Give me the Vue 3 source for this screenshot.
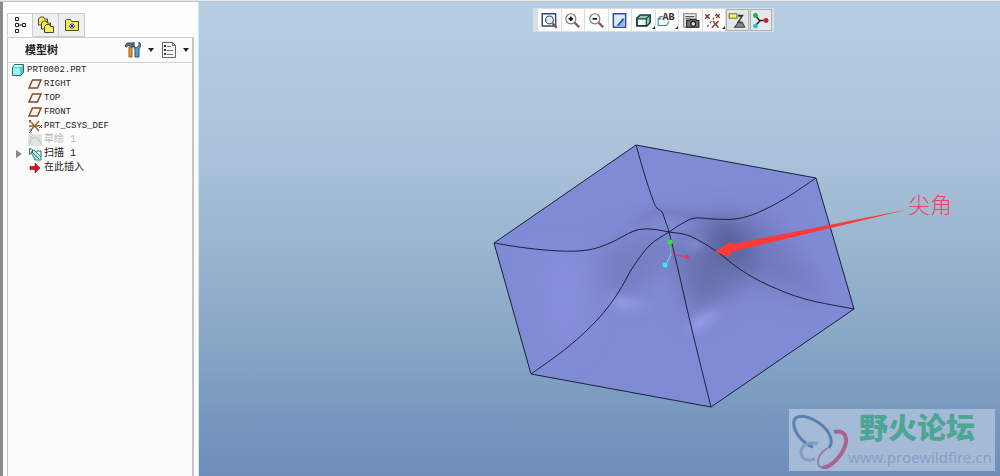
<template>
  <div class="app">
    <div class="top-edge"></div>

    <div class="workspace">
      <aside class="sidebar">
        <div class="navigator">
          <nav class="tabs">
            <button
              v-for="tab in tabs"
              :key="tab.id"
              type="button"
              class="tab"
              :class="{ active: activeTab === tab.id }"
              :aria-label="tab.label"
              @click="activeTab = tab.id"
            >
              <svg v-if="tab.id === 'tree'" width="14" height="18" viewBox="0 0 14 18" fill="none" stroke="#222">
                <path d="M2.5 1.5h3v3h-3zM2.5 7.5h3v3h-3zM9.500 7.500h3v3h-3zM2.500 13.500h3v3h-3zM6 9h3" />
              </svg>
              <svg v-else-if="tab.id === 'folders'" width="18" height="18" viewBox="0 0 18 18" fill="#f3ee62" stroke="#4a4618">
                <path d="M1.500 9V3l2-2h3l1 2h3v6z" />
                <path d="M4.500 13V7l2-2h3l1 2h3v6z" />
                <path d="M7.500 16.500V10.500l2-2h3l1 2h3v6z" />
              </svg>
              <svg v-else width="16" height="16" viewBox="0 0 16 16">
                <path d="M1.500 13.500v-10l1-1h4l1 2h7v9z" fill="#f5ee5c" stroke="#4a4618" />
                <path d="M8 6v6M5 9h6M6 7l4 4M10 7l-4 4" stroke="#2746b8" />
              </svg>
            </button>
          </nav>

          <div class="tree-panel">
            <header class="tree-header">
              <h2>模型树</h2>
              <button type="button" class="menu-button" aria-label="设置">
                <svg width="17" height="18" viewBox="0 0 17 18">
                  <path d="M1 5l2-3h6v4H7L5 4 2 6z" fill="#68777f" stroke="#384850" />
                  <path d="M5 6h3v10H5z" fill="#e39b38" stroke="#9a5a16" />
                  <path d="M10 1v4l2 2 3-2V1l2 3-2 4v8h-4V8L9 5z" fill="#4fa3cf" stroke="#28506a" />
                </svg>
                <span class="caret"></span>
              </button>
              <button type="button" class="menu-button list" aria-label="显示">
                <svg width="14" height="16" viewBox="0 0 14 16">
                  <path d="M.5 .5h10l3 3v12H.5z" fill="#fafaf4" stroke="#666" />
                  <path d="M10.500 .5v3h3" fill="none" stroke="#666" />
                  <path d="M2 4h2M2 8h2M2 12h2" stroke="#333" stroke-width="2" />
                  <path d="M5 4.500h4M5 8.500h6M5 12.500h6" stroke="#777" />
                </svg>
                <span class="caret"></span>
              </button>
            </header>

            <ul class="tree">
              <li
                v-for="item in items"
                :key="item.name"
                :class="{ root: item.icon === 'part', feature: item.feature, disabled: item.disabled }"
              >
                <span class="expander"><span v-if="item.expandable" class="triangle"></span></span>
                <svg v-if="item.icon === 'part'" class="icon" viewBox="0 0 14 14">
                  <path d="M1.500 4.500l2-3h9v8l-3 3h-8z" fill="#58c8cc" stroke="#286870" />
                  <path d="M2 5h7v7H2z" fill="#9df2f0" />
                  <path d="M2 4l2-2h8l-2 2z" fill="#d2fbf8" />
                </svg>
                <svg v-else-if="item.icon === 'plane'" class="icon" viewBox="0 0 14 14">
                  <path d="M4.500 3h8.500l-3.500 8H1z" fill="#fff8f0" stroke="#884522" stroke-width="1.400" />
                </svg>
                <svg v-else-if="item.icon === 'csys'" class="icon" viewBox="0 0 14 14">
                  <path d="M1 7h10M3 3l8 9M11 2L3 11" stroke="#a06424" stroke-width="1.400" />
                  <path d="M1 1l2 2M3 1L1 4M11 6l3 3M14 6l-3 3M1 11h3l-3 3h3" stroke="#555" fill="none" />
                </svg>
                <svg v-else-if="item.icon === 'sketch'" class="icon" viewBox="0 0 14 14">
                  <path d="M0 1h14v12H0z" fill="#e3e3e1" />
                  <path d="M2 11c1-9 8-9 11 0M2 5l3-3" fill="none" stroke="#bcbcb8" />
                </svg>
                <svg v-else-if="item.icon === 'sweep'" class="icon" viewBox="0 0 14 14">
                  <path d="M3 5l3-2 7 7v3H7z" fill="#a8ecec" stroke="#428088" />
                  <path d="M1.500 1.500l3 1v3l-3 2zM4 5l7 7M8 4h5v6" fill="none" stroke="#41656b" />
                </svg>
                <svg v-else class="icon" viewBox="0 0 14 14">
                  <path d="M2 5.500h5V2l5 5-5 5V8.500H2z" fill="#e01222" stroke="#780c12" stroke-width=".6" />
                </svg>
                <span>{{ item.name }}</span>
              </li>
            </ul>
          </div>
        </div>
      </aside>

      <main class="viewport">
        <svg class="model" viewBox="199 2 801 474" role="img" aria-label="扫描 1">
          <defs>
            <clipPath id="body-clip"><path :d="outline" /></clipPath>
            <filter id="soft" x="-60%" y="-60%" width="220%" height="220%">
              <feGaussianBlur stdDeviation="13" />
            </filter>
            <filter id="fine" x="-60%" y="-60%" width="220%" height="220%">
              <feGaussianBlur stdDeviation="5" />
            </filter>
          </defs>

          <path :d="outline" fill="#808bd5" />
          <g clip-path="url(#body-clip)">
            <g filter="url(#soft)">
              <path d="M690 220L770 216L830 300L770 288L735 268L706 240Z" fill="#727bc0" />
              <path d="M700 218L742 222L758 276L714 250Z" fill="#525b92" />
              <path d="M672 238L708 246L750 280L692 316Z" fill="#676fab" />
              <path d="M598 250L655 230L668 258L640 292L606 300Z" fill="#747ec1" />
              <path d="M535 256L590 256L580 340L550 360Z" fill="#858fdc" />
            </g>
            <g filter="url(#fine)">
              <path d="M624 228L657 207L700 215L720 219L690 219L657 213Z" fill="#6a73b0" />
              <path d="M660 217L684 220L670 229Z" fill="#838ed5" />
              <path d="M684 246L700 240L706 243L694 250Z" fill="#8c96dc" />
              <path d="M610 296L624 298L650 305L618 309Z" fill="#949eee" />
              <path d="M690 322L724 305L712 320L693 334Z" fill="#959feb" />
            </g>
          </g>

          <path :d="outline" class="edge" />
          <path v-for="(curve, i) in curves" :key="i" :d="smooth(curve)" class="edge" />

          <g class="csys">
            <path d="M671 254L670 242" stroke="#48c96c" />
            <path d="M671 254L666 265" stroke="#7fd8f2" />
            <path d="M672 254L686 257" stroke="#d8405c" />
            <circle cx="670" cy="242" r="2.500" fill="#2bea3c" />
            <circle cx="665" cy="265" r="2.500" fill="#3ce6fa" />
            <circle cx="687" cy="257" r="2" fill="#e23a4c" />
          </g>

          <path d="M910 209L733 244L730 242L715 252L730 257L731 252Z" fill="#fd3a37" />
          <text x="908" y="213" class="note">尖角</text>
        </svg>

        <div class="view-toolbar" role="toolbar">
          <button
            v-for="tool in tools"
            :key="tool.id"
            type="button"
            :aria-label="tool.label"
            :class="{ pressed: tool.pressed }"
          >
            <svg width="19" height="19" viewBox="0 0 17 17" fill="none">
              <template v-if="tool.id === 'refit'">
                <path d="M2 2.500h12v11H2z" fill="#fff" stroke="#2c4682" stroke-width="1.300" />
                <circle cx="8.500" cy="8" r="3.500" fill="#dceef6" stroke="#445" />
                <path d="M11 11l4 4" stroke="#8c5040" stroke-width="2" />
              </template>
              <template v-else-if="tool.id === 'zoomIn' || tool.id === 'zoomOut'">
                <circle cx="7" cy="7" r="4.500" fill="#f6f9fb" stroke="#777" />
                <path d="M5 7h4" stroke="#111" stroke-width="1.600" />
                <path v-if="tool.id === 'zoomIn'" d="M7 5v4" stroke="#111" stroke-width="1.600" />
                <path d="M10.500 10.500l4 4" stroke="#8c5040" stroke-width="2" />
              </template>
              <template v-else-if="tool.id === 'repaint'">
                <path d="M3 2.500h11v12H3z" fill="#dcebfb" stroke="#2c4da0" stroke-width="1.300" />
                <path d="M5 14l8-8v8z" fill="#8fb6ea" />
                <path d="M7 13l5-6" stroke="#2b4d94" stroke-width="1.500" />
              </template>
              <template v-else-if="tool.id === 'shading'">
                <path d="M2.500 6.500l3-3h9v7l-3 3h-9z" fill="#8bcab8" stroke="#173b34" stroke-width="1.300" />
                <path d="M3 7h8v6H3z" fill="#f4fffb" stroke="#173b34" />
                <path d="M11 7l3-3" stroke="#173b34" />
              </template>
              <template v-else-if="tool.id === 'views'">
                <path d="M5 5H3L1 7v6h7l2-2V9M1 7h3" stroke="#3c8796" />
                <text x="5" y="8" class="glyph">AB</text>
              </template>
              <template v-else-if="tool.id === 'capture'">
                <path d="M2.500 2.500h11v12h-11z" fill="#f2f2f2" stroke="#777" />
                <path d="M4 5h8M4 7h5" stroke="#555" />
                <path d="M5 8.500h3l1-1h4l1 1h2v6H5z" fill="#777" stroke="#222" />
                <circle cx="11" cy="11.500" r="2.200" fill="#ddd" stroke="#111" />
              </template>
              <template v-else-if="tool.id === 'datum'">
                <path d="M1 3l4 4M5 3L1 7M8 9l5 6M13 9l-6 6M11 3l3 3M14 3l-3 3" stroke="#8c3d2c" stroke-width="1.300" />
                <path d="M3 14L12 2" stroke="#444" stroke-dasharray="2 2" />
              </template>
              <template v-else-if="tool.id === 'annotation'">
                <path d="M1 2.500h7v4H1z" fill="#f4ee75" stroke="#817522" />
                <path d="M9 4.500h3M9 4h4l-4 6h4" stroke="#333" stroke-width="1.300" />
                <path d="M6 14.500l3-4h4l2 4z" fill="#888" stroke="#444" />
              </template>
              <template v-else>
                <path d="M4 4l4 5-4 4M8 8.500h6" stroke="#222" stroke-width="1.300" />
                <circle cx="4" cy="4" r="2.200" fill="#20b24a" />
                <circle cx="13.500" cy="8.500" r="2.200" fill="#c81f38" />
                <circle cx="4" cy="13.500" r="2.200" fill="#2bc0c4" />
              </template>
            </svg>
            <span v-if="tool.menu" class="corner"></span>
          </button>
        </div>

        <div class="watermark">
          <svg width="58" height="58" viewBox="0 0 58 58" fill="none">
            <path d="M39 37c6-8-1-21-15-28C11 2 2 5 4 15c2 9 10 18 19 21" stroke="#5a7fae" stroke-width="3" />
            <path d="M28 33c-8-3-17 1-17 8 0 8 7 9 14 7" stroke="#829dc4" stroke-width="3" />
            <path d="M44 21c8-2 13 2 12 10-2 12-14 25-24 26" stroke="#a86391" stroke-width="4" />
            <path d="M32 57c-7-3-5-14 6-20" stroke="#8b86b0" stroke-width="2" />
          </svg>
          <div class="brand">
            <strong>野火论坛</strong>
            <span>www.proewildfire.cn</span>
          </div>
        </div>
      </main>
    </div>
  </div>
</template>

<script setup>
import { ref } from "vue";

const activeTab = ref("tree");

const tabs = [
  { id: "tree", label: "模型树" },
  { id: "folders", label: "文件夹浏览器" },
  { id: "favorites", label: "收藏夹" },
];

const items = [
  { name: "PRT0002.PRT", icon: "part" },
  { name: "RIGHT", icon: "plane" },
  { name: "TOP", icon: "plane" },
  { name: "FRONT", icon: "plane" },
  { name: "PRT_CSYS_DEF", icon: "csys" },
  { name: "草绘 1", icon: "sketch", feature: true, disabled: true },
  { name: "扫描 1", icon: "sweep", feature: true, expandable: true },
  { name: "在此插入", icon: "insert", feature: true },
];

const tools = [
  { id: "refit", label: "重新调整" },
  { id: "zoomIn", label: "放大" },
  { id: "zoomOut", label: "缩小" },
  { id: "repaint", label: "重画" },
  { id: "shading", label: "显示样式", menu: true },
  { id: "views", label: "已命名视图", menu: true },
  { id: "capture", label: "视图管理器" },
  { id: "datum", label: "基准显示", menu: true },
  { id: "annotation", label: "注释显示", pressed: true },
  { id: "spin", label: "旋转中心", pressed: true },
];

const outline = "M636 145L816 178L854 309L711 407L531 374L494 243Z";

// boundary curves through the apex
const curves = [
  [[636, 145], [645, 176], [653, 200], [657, 208], [662, 212], [666, 223], [669, 232], [678, 269], [692, 330], [711, 407]],
  [[494, 243], [526, 248], [560, 251], [588, 250], [610, 243], [634, 231], [650, 229], [669, 232], [690, 236], [716, 251], [741, 270], [768, 285], [805, 299], [854, 309]],
  [[816, 178], [786, 198], [757, 213], [735, 219], [713, 219], [695, 218], [683, 223], [669, 232], [650, 245], [633, 267], [618, 293], [598, 319], [568, 347], [531, 374]],
];

// Catmull-Rom spline to cubic beziers
function smooth(pts) {
  let d = `M${pts[0].join(" ")}`;
  for (let i = 0; i < pts.length - 1; i++) {
    const p0 = pts[i - 1] || pts[i];
    const p1 = pts[i];
    const p2 = pts[i + 1];
    const p3 = pts[i + 2] || p2;
    d += `C${p1[0] + (p2[0] - p0[0]) / 6} ${p1[1] + (p2[1] - p0[1]) / 6}`;
    d += ` ${p2[0] - (p3[0] - p1[0]) / 6} ${p2[1] - (p3[1] - p1[1]) / 6}`;
    d += ` ${p2[0]} ${p2[1]}`;
  }
  return d;
}
</script>

<style>
body {
  margin: 0;
}
</style>

<style scoped>
.app {
  display: flex;
  flex-direction: column;
  min-height: 100vh;
  font-family: "Liberation Sans", "Noto Sans CJK SC", sans-serif;
  background: #fcfdfd;
}

.top-edge {
  height: 1px;
  background: #e4e8e8;
  border-bottom: 1px solid #bfc5c8;
}

.workspace {
  display: flex;
  flex: 1;
}

button {
  display: flex;
  align-items: center;
  justify-content: center;
  padding: 0;
  border: none;
  background: none;
  cursor: pointer;
}

.sidebar {
  display: flex;
  box-sizing: border-box;
  width: 199px;
  flex-shrink: 0;
  padding: 11px 4px 0 4px;
  border-left: 3px solid #8c8a88;
  border-right: 1px solid #d4e6f0;
}

.navigator {
  display: flex;
  flex-direction: column;
  flex: 1;
}

.tabs {
  display: flex;
}

.tab {
  box-sizing: border-box;
  width: 26px;
  height: 24px;
  background: #ecf0f0;
  border: 1px solid #c9cecf;
  border-left: none;
}

.tab.active {
  background: #fcfdfd;
  border-left: 1px solid #c9cecf;
  border-bottom-color: #fcfdfd;
}

.tree-panel {
  flex: 1;
  border-left: 1px solid #c4c4c4;
  border-right: 2px solid #c2c6c6;
  border-top: 1px solid #c9cecf;
  background: #fcfcfc;
}

.tree-header {
  display: flex;
  align-items: center;
  height: 24px;
  padding: 0 3px 0 17px;
  border-bottom: 1px solid #cfd2d2;
}

.tree-header h2 {
  flex: 1;
  margin: 0;
  font-size: 11px;
  line-height: 16px;
  font-weight: 700;
  color: #222;
}

.menu-button {
  gap: 7px;
  margin-left: 8px;
}

.caret {
  border: 3px solid transparent;
  border-top: 4px solid #222;
  border-bottom: none;
}

.tree {
  margin: 0;
  padding: 0 0 0 8px;
  list-style: none;
  font-family: "Liberation Mono", "Noto Sans CJK SC", monospace;
  font-size: 9px;
  color: #222;
}

.tree li {
  display: flex;
  align-items: center;
  height: 14px;
  line-height: 14px;
  white-space: pre;
}

.tree li.feature {
  font-size: 10px;
}

.tree li.disabled {
  color: #b8b8b8;
}

.expander {
  width: 12px;
}

.root .expander {
  display: none;
}

.root .icon {
  margin-left: -5px;
}

.triangle {
  display: block;
  width: 0;
  border: 4px solid transparent;
  border-left: 6px solid #858585;
  border-right: none;
}

.icon {
  width: 14px;
  height: 14px;
  margin-right: 2px;
}

.viewport {
  position: relative;
  flex: 1;
  min-width: 0;
  background: linear-gradient(#b6cfe4, #a9c2d9 33%, #8dabc8 66%, #6b8db8);
}

.model {
  position: absolute;
  inset: 0;
  width: 100%;
  height: 100%;
}

.edge {
  fill: none;
  stroke: #1c1f3c;
  stroke-width: 1;
}

.note {
  font-family: "Liberation Serif", "Noto Sans CJK SC", serif;
  font-size: 22px;
  font-weight: 300;
  fill: #ee4560;
}

.view-toolbar {
  position: relative;
  display: flex;
  gap: 1px;
  box-sizing: border-box;
  width: 241px;
  margin: 6px 0 0 334px;
  padding: 1px 2px 1px 5px;
  background: #d9dee0;
}

.view-toolbar button {
  position: relative;
  flex: 1;
  height: 22px;
  background: #fdfdfd;
}

.view-toolbar button.pressed {
  background: #e4e8ea;
  box-shadow: inset 0 0 0 1px #a8b0b4;
}

.corner {
  position: absolute;
  right: 0;
  bottom: 2px;
  border-left: 3px solid transparent;
  border-bottom: 3px solid #333;
}

.glyph {
  font-family: "Liberation Mono", monospace;
  font-size: 9px;
  font-weight: 700;
  fill: #333;
}

.watermark {
  position: absolute;
  right: 5px;
  bottom: 5px;
  display: flex;
  align-items: center;
  box-sizing: border-box;
  width: 206px;
  height: 62px;
  padding-left: 1px;
  background: #a5bad6;
}

.watermark svg {
  flex-shrink: 0;
}

.brand {
  display: flex;
  flex-direction: column;
}

.brand strong {
  padding-left: 11px;
  font-size: 29px;
  line-height: 34px;
  font-weight: 900;
  color: #4ba793;
}

.brand span {
  font-family: "Noto Sans", sans-serif;
  font-size: 15px;
  line-height: 22px;
  color: #84a0c8;
}
</style>
